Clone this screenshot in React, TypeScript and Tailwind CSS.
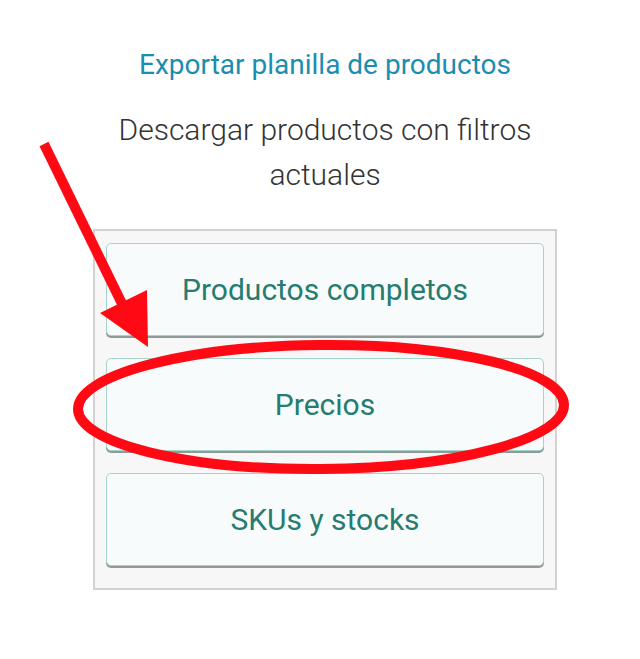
const buttons = ["Productos completos", "Precios", "SKUs y stocks"];

export default function App() {
  return (
    <div className="relative w-[640px] h-[659px] bg-white overflow-hidden" style={{ fontFamily: "Roboto, 'Liberation Sans', sans-serif" }}>
      <div className="ml-[93px] w-[464px] pt-[45px] flex flex-col items-center">
        <h2 className="text-[28px] leading-[40px] text-[#1b8db0] whitespace-nowrap">Exportar planilla de productos</h2>
        <p className="mt-[22px] w-[450px] text-center text-[30px] leading-[45px] font-light text-[#333]">
          Descargar productos con filtros actuales
        </p>
        <div className="mt-[32px] w-[464px] border-2 border-[#d2d2d2] bg-[#f7f7f7] px-[11px] pt-[12px] pb-[22px] flex flex-col gap-[22px]">
          {buttons.map((b) => (
            <button
              key={b}
              className="h-[93px] w-full rounded-[5px] border border-[#a4d4ca] bg-[#f8fbfc] shadow-[0_2px_0_#8f9a98] text-[30px] text-[#267c6e]"
            >
              {b}
            </button>
          ))}
        </div>
      </div>
      <svg className="absolute left-0 top-0" width="640" height="659" viewBox="0 0 640 659">
        <line x1="44" y1="144" x2="128" y2="316" stroke="#ff0a14" strokeWidth="10" />
        <polygon points="100,313 147,290 148,347" fill="#ff0a14" />
        <ellipse cx="321" cy="407" rx="243" ry="62" fill="none" stroke="#ff0a14" strokeWidth="10" transform="rotate(-0.5 321 407)" />
      </svg>
    </div>
  );
}
